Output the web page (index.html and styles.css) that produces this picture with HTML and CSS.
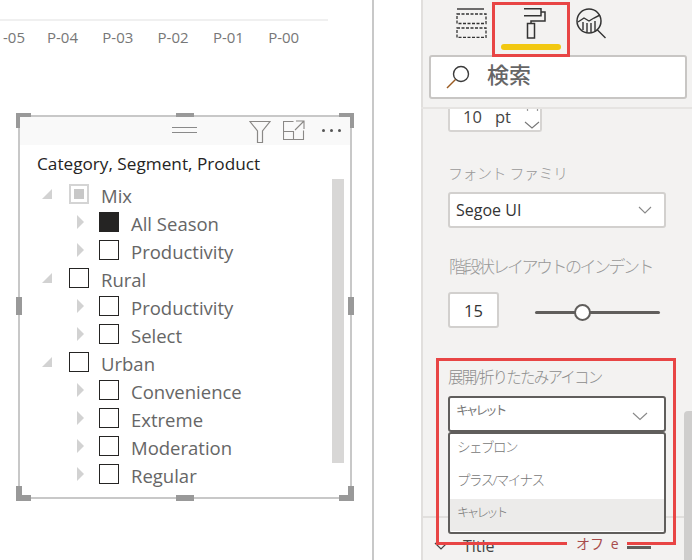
FILE: index.html
```html
<!DOCTYPE html>
<html lang="ja">
<head>
<meta charset="utf-8">
<title>Slicer format</title>
<link rel="stylesheet" href="styles.css">
</head>
<body>
<div class="page">
  <section class="canvas">
    <div class="axis-rule"></div>
    <div class="axis">
      <span class="tick tick-cut">-05</span><span class="tick">P-04</span><span class="tick">P-03</span><span class="tick">P-02</span><span class="tick">P-01</span><span class="tick">P-00</span>
    </div>
    <div class="visual">
      <i class="h c-tl"></i><i class="h c-tr"></i><i class="h c-bl"></i><i class="h c-br"></i>
      <i class="h m-t"></i><i class="h m-b"></i><i class="h m-l"></i><i class="h m-r"></i>
      <header class="visual-head">
        <div class="grip"></div>
        <div class="visual-tools">
          <svg class="ic-filter" width="22" height="24" viewBox="0 0 22 24"><path d="M1 1.500h20L13.500 11v11.500h-5V11z" fill="none" stroke="#8a8886" stroke-width="1.200"/></svg>
          <svg class="ic-focus" width="22" height="20" viewBox="0 0 22 20"><path d="M20.500 10.500v9H.5V1.500h10M.5 11.500h10v8M13 1h8v8M21 1l-9 9" fill="none" stroke="#8a8886" stroke-width="1.100"/></svg>
          <span class="dots"><b></b><b></b><b></b></span>
        </div>
      </header>
      <div class="slicer">
        <div class="slicer-title">Category, Segment, Product</div>
        <div class="tree">
          <div class="row l1"><i class="tri-open"></i><i class="cb cb-part"><i></i></i><span>Mix</span></div>
          <div class="row l2"><i class="tri"></i><i class="cb cb-on"></i><span>All Season</span></div>
          <div class="row l2"><i class="tri"></i><i class="cb"></i><span>Productivity</span></div>
          <div class="row l1"><i class="tri-open"></i><i class="cb"></i><span>Rural</span></div>
          <div class="row l2"><i class="tri"></i><i class="cb"></i><span>Productivity</span></div>
          <div class="row l2"><i class="tri"></i><i class="cb"></i><span>Select</span></div>
          <div class="row l1"><i class="tri-open"></i><i class="cb"></i><span>Urban</span></div>
          <div class="row l2"><i class="tri"></i><i class="cb"></i><span>Convenience</span></div>
          <div class="row l2"><i class="tri"></i><i class="cb"></i><span>Extreme</span></div>
          <div class="row l2"><i class="tri"></i><i class="cb"></i><span>Moderation</span></div>
          <div class="row l2"><i class="tri"></i><i class="cb"></i><span>Regular</span></div>
        </div>
        <div class="slicer-scroll"></div>
      </div>
    </div>
  </section>
  <div class="gutter"></div>
  <aside class="panel">
    <nav class="tabs">
      <svg class="ic-fields" width="31" height="30" viewBox="0 0 31 30">
        <path d="M1 1h27" stroke="#333" stroke-width="1.400" fill="none"/>
        <rect x="1" y="6" width="29" height="9.500" fill="none" stroke="#333" stroke-width="1.300" stroke-dasharray="3 1.500"/>
        <rect x="1" y="20" width="29" height="9.500" fill="none" stroke="#333" stroke-width="1.300" stroke-dasharray="3 1.500"/>
      </svg>
      <div class="tab-active">
        <svg class="ic-roller" width="22" height="31" viewBox="0 0 22 31">
          <path d="M0 .8h17v7H0M17 4h4v9H7v2.500" fill="none" stroke="#333" stroke-width="1.500"/>
          <rect x="3.500" y="15.500" width="7" height="14.500" fill="none" stroke="#333" stroke-width="1.500"/>
        </svg>
        <span class="tab-bar"></span>
      </div>
      <svg class="ic-analytics" width="32" height="32" viewBox="0 0 32 32">
        <circle cx="13" cy="13" r="12" fill="none" stroke="#333" stroke-width="1.500"/>
        <path d="M2 14l6-4 5 3 5-3 6-3M7 14v8M11 15v9M15 15v9M19 13v10M29.500 30L21 21.500" fill="none" stroke="#333" stroke-width="1.400"/>
      </svg>
    </nav>
    <div class="search">
      <svg width="24" height="24" viewBox="0 0 24 24">
        <circle cx="15" cy="9" r="7.500" fill="none" stroke="#3a3a3a" stroke-width="1.400"/>
        <path d="M9.500 14.500L1 23" stroke="#9a5a20" stroke-width="1.400" fill="none"/>
      </svg>
      <span>検索</span>
    </div>
    <div class="panel-rule"></div>
    <div class="format">
      <div class="spin">
        <span class="spin-val">10</span><span class="spin-unit">pt</span>
        <svg width="18" height="24" viewBox="0 0 18 24"><path d="M3 1.500l1 1M13 2.500l1-1M1 14l7 6 7-6" fill="none" stroke="#777" stroke-width="1.100"/></svg>
      </div>
      <div class="label label-font">フォント ファミリ</div>
      <div class="select">
        <span>Segoe UI</span>
        <svg width="14" height="8" viewBox="0 0 14 8"><path d="M1 1l6 6 6-6" fill="none" stroke="#888" stroke-width="1.100"/></svg>
      </div>
      <div class="label label-indent">階段状レイアウトのインデント</div>
      <div class="indent">
        <div class="num">15</div>
        <div class="slider"><i class="thumb"></i></div>
      </div>
      <div class="label label-icon">展開/折りたたみアイコン</div>
      <div class="select select-open">
        <span>キャレット</span>
        <svg width="16" height="9" viewBox="0 0 16 9"><path d="M1 1l7 6.500L15 1" fill="none" stroke="#888" stroke-width="1.100"/></svg>
      </div>
      <ul class="options">
        <li>シェブロン</li>
        <li>プラス/マイナス</li>
        <li class="picked">キャレット</li>
      </ul>
      <div class="title-row">
        <svg width="14" height="8" viewBox="0 0 14 8"><path d="M1 1l6 6 6-6" fill="none" stroke="#444" stroke-width="1.200"/></svg>
        <span>Title</span>
      </div>
    </div>
    <div class="section-rule"></div>
    <div class="callout"><span class="callout-text">オフ e</span></div>
    <i class="toggle-mark"></i>
    <div class="panel-scroll"></div>
  </aside>
</div>
</body>
</html>
```
FILE: styles.css
```css
* { box-sizing: border-box; }
html, body { margin: 0; padding: 0; background: #fff; }
body { font-family: "Open Sans", "Noto Sans CJK JP", sans-serif; }
i { display: block; font-style: normal; }
ul { list-style: none; margin: 0; padding: 0; }

.page { display: flex; width: 692px; height: 560px; overflow: hidden; }

/* report canvas */
.canvas { width: 374px; flex: none; border-right: 2px solid #c8c8c8; padding-top: 19px; }
.axis-rule { width: 328px; height: 2px; background: #f0f0f0; }
.axis { display: flex; height: 30px; align-items: center; padding-top: 1px; margin-left: -8px; color: #777; font-size: 15px; }
.tick { width: 55.300px; flex: none; }
.tick-cut { width: 55px; padding-left: 11px; }

.visual { position: relative; width: 334px; height: 384px; margin: 64px 0 0 18px; border: 2px solid #c8c8c8; background: #fff; }
.h { position: absolute; background: #999; }
.c-tl, .c-tr, .c-bl, .c-br { width: 15px; height: 15px; background: none; }
.c-tl { left: -4px; top: -4px; border-left: 6px solid #999; border-top: 6px solid #999; }
.c-tr { right: -4px; top: -4px; border-right: 6px solid #999; border-top: 6px solid #999; }
.c-bl { left: -4px; bottom: -4px; border-left: 6px solid #999; border-bottom: 6px solid #999; }
.c-br { right: -4px; bottom: -4px; border-right: 6px solid #999; border-bottom: 6px solid #999; }
.m-t, .m-b { left: 156px; width: 18px; height: 6px; }
.m-t { top: -4px; }
.m-b { bottom: -4px; }
.m-l, .m-r { top: 180px; width: 6px; height: 18px; }
.m-l { left: -4px; }
.m-r { right: -4px; }

.visual-head { position: relative; display: flex; align-items: flex-start; height: 28px; background: #f9f9f9; }
.grip { position: absolute; left: 152px; top: 10px; width: 25px; height: 6px; border-top: 1px solid #8a8a8a; border-bottom: 1px solid #8a8a8a; }
.visual-tools { margin-left: auto; display: flex; align-items: flex-start; }
.ic-filter { margin-top: 3px; }
.ic-focus { margin: 3px 0 0 12px; }
.dots { display: flex; gap: 5px; margin: 12px 9px 0 17px; }
.dots b { width: 3px; height: 3px; border-radius: 50%; background: #555; }

.slicer { position: relative; padding: 7px 0 0 17px; }
.slicer-title { font-size: 17.200px; line-height: 24px; color: #252423; margin-bottom: 4px; }
.tree { display: flex; flex-direction: column; }
.row { display: flex; align-items: center; height: 28px; color: #666; font-size: 18.500px; white-space: nowrap; }
.row span { display: block; padding-top: 2px; }
.l1 { padding-left: 5px; }
.l2 { padding-left: 40px; }
.tri-open { width: 0; height: 0; margin: 0 17px 0 0; border-style: solid; border-width: 0 0 10px 10px; border-color: transparent transparent #d2d2d2 transparent; }
.tri { width: 0; height: 0; margin: 0 15px 1px 0; border-style: solid; border-width: 7px 0 7px 7px; border-color: transparent transparent transparent #d2d2d2; }
.cb { width: 20px; height: 20px; border: 1px solid #252423; flex: none; background: #fff; margin-right: 12px; }
.cb-on { background: #252423; }
.cb-part { border: 2px solid #d4d4d4; padding: 3px; }
.cb-part i { width: 10px; height: 10px; background: #c8c8c8; }
.slicer-scroll { position: absolute; left: 312px; top: 34px; width: 12px; height: 284px; background: #d8d7d6; }

/* gutter and panel */
.gutter { width: 47px; flex: none; background: #fff; }
.panel { position: relative; flex: 1; background: #f3f2f1; border-left: 2px solid #e1dfdd; }
.tabs { position: relative; display: flex; align-items: flex-start; height: 55px; }
.ic-fields { margin: 8px 0 0 33px; flex: none; }
.tab-active { position: relative; z-index: 2; width: 78px; height: 55px; margin: 2px 0 0 5px; border: 3px solid #e84545; padding-top: 3px; flex: none; }
.ic-roller { display: block; margin-left: 29px; }
.tab-bar { position: absolute; left: 6px; top: 39px; width: 60px; height: 6px; border-radius: 3px; background: #f2c811; }
.ic-analytics { margin: 8px 0 0 6px; flex: none; }
.search { display: flex; align-items: center; width: 258px; height: 44px; margin-left: 6px; background: #fff; border: 2px solid #c8c6c4; border-radius: 3px; color: #666; font-size: 22px; padding-left: 15px; }
.search svg { margin-right: 17px; flex: none; }
.search span { font-weight: 500; margin-top: -8px; }
.panel-rule { height: 2px; margin-top: 8px; background: #e6e4e2; margin-left: -2px; }
.format { position: relative; padding-left: 25px; }
.spin { display: flex; align-items: center; width: 94px; height: 23px; background: #fff; border: 2px solid #d6d4d2; border-top: 0; border-radius: 0 0 3px 3px; color: #444; font-size: 16.500px; padding-left: 13px; }
.spin-val, .spin-unit { align-self: flex-start; line-height: 22px; margin-top: -3px; }
.spin-unit { margin-left: 13px; }
.spin svg { margin-left: 13px; flex: none; }

.label { color: #999; font-size: 14px; line-height: 20px; white-space: nowrap; font-weight: 300; }
.label-font { margin-top: 31px; font-size: 15px; letter-spacing: -.5px; }
.label-indent { margin-top: 28px; margin-left: 1px; font-size: 17px; line-height: 22px; letter-spacing: -2.500px; }
.label-icon { margin-top: 39px; font-size: 15.500px; letter-spacing: -1.800px; color: #8c8c8c; }

.select { display: flex; align-items: center; justify-content: space-between; width: 218px; height: 36px; margin-top: 9px; background: #fff; border: 2px solid #d2d0ce; border-radius: 3px; color: #333; font-size: 16px; padding: 0 12px 0 6px; }
.select-open { margin-top: 9px; border-color: #605e5c; color: #777; font-size: 12.500px; letter-spacing: -2.800px; padding: 3px 16px 0 6px; align-items: flex-start; }
.select-open span { line-height: 20px; }
.select-open svg { margin-top: 11px; }

.indent { display: flex; align-items: center; height: 36px; margin-top: 14px; }
.num { width: 51px; height: 36px; display: flex; align-items: center; justify-content: center; background: #fff; border: 2px solid #d2d0ce; border-radius: 3px; color: #333; font-size: 16.500px; }
.slider { position: relative; width: 125px; height: 3px; margin: 4px 0 0 36px; background: #605e5c; border-radius: 2px; }
.thumb { position: absolute; left: 39px; top: -7px; width: 17px; height: 17px; border-radius: 50%; background: #fff; border: 2px solid #605e5c; }

.options { position: relative; z-index: 1; width: 218px; height: 102px; background: #fff; border: 2px solid #605e5c; border-radius: 3px; color: #777; font-size: 13.500px; letter-spacing: -1.500px; font-weight: 300; }
.options li { height: 33px; line-height: 27px; padding-left: 7px; }
.options li + li { height: 32px; }
.options .picked { background: #ecebea; font-size: 12.500px; letter-spacing: -2.800px; }
.title-row { position: relative; display: flex; align-items: center; height: 24px; margin: 0 0 0 -14px; color: #444; font-size: 16px; }
.title-row span { margin-left: 15px; }
.section-rule { position: absolute; left: 0; right: 0; top: 516px; height: 2px; background: #e1dfdd; }

/* annotation over the panel */
.callout { position: absolute; z-index: 3; left: 13px; top: 358px; width: 240px; height: 187px; border: 3px solid #e84545; }
.callout-text { position: absolute; left: 128px; bottom: -12px; width: 60px; height: 20px; padding-left: 9px; background: #f3f2f1; color: #a84b4b; font-size: 14px; line-height: 20px; word-spacing: 3px; white-space: nowrap; }
.toggle-mark { position: absolute; z-index: 4; left: 204px; top: 546px; width: 24px; height: 3px; background: #605e5c; }
.panel-scroll { position: absolute; right: 0; top: 411px; width: 8px; height: 149px; border-radius: 4px 0 0 0; background: #cfcecd; }
```
